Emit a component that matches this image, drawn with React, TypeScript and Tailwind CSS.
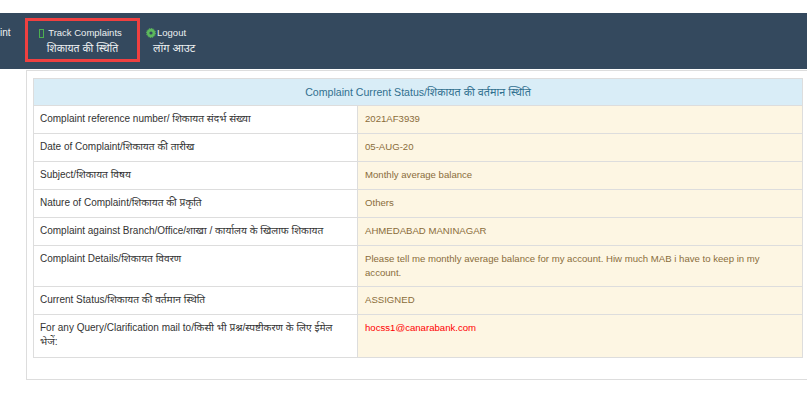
const rows: { en: string; hi: string; value: string; tall?: string; red?: boolean }[] = [
  { en: 'Complaint reference number/ ', hi: 'शिकायत संदर्भ संख्या', value: '2021AF3939' },
  { en: 'Date of Complaint/', hi: 'शिकायत की तारीख', value: '05-AUG-20' },
  { en: 'Subject/', hi: 'शिकायत विषय', value: 'Monthly average balance' },
  { en: 'Nature of Complaint/', hi: 'शिकायत की प्रकृति', value: 'Others' },
  { en: 'Complaint against Branch/Office/', hi: 'शाखा / कार्यालय के खिलाफ शिकायत', value: 'AHMEDABAD MANINAGAR' },
  {
    en: 'Complaint Details/',
    hi: 'शिकायत विवरण',
    value: 'Please tell me monthly average balance for my account. Hiw much MAB i have to keep in my account.',
    tall: 'h-[41px]',
  },
  { en: 'Current Status/', hi: 'शिकायत की वर्तमान स्थिति', value: 'ASSIGNED' },
  {
    en: 'For any Query/Clarification mail to/',
    hi: 'किसी भी प्रश्न/स्पष्टीकरण के लिए ईमेल भेजें:',
    value: 'hocss1@canarabank.com',
    tall: 'h-[42px]',
    red: true,
  },
];

const App = () => {
  return (
    <div className="h-[417px] w-[807px] overflow-hidden bg-white pt-[13px] font-['Liberation_Sans','Noto_Sans',sans-serif] text-[10px] leading-[14px] text-[#333]">
      <nav className="flex h-[56px] items-start bg-[#34495e] text-[#ecf0f1]">
        <div className="w-[25px] pt-[13px]">int</div>
        <div className="mt-[5px] flex h-[44px] w-[115px] flex-col items-center border-[3px] border-[#f04040] pt-[5px]">
          <span className="flex items-center whitespace-nowrap pr-[4px] text-[9.5px]">
            <span className="mr-[4px] h-[9px] w-[5px] border border-[#4caf50]" />
            Track Complaints
          </span>
          <span className="mt-px text-[10.5px]">शिकायत की स्थिति</span>
        </div>
        <div className="ml-[6px] flex flex-col pt-[13px]">
          <span className="flex items-center whitespace-nowrap text-[9.5px]">
            <svg className="mr-px h-[10px] w-[10px]" viewBox="0 0 10 10">
              <circle cx="5" cy="5" r="2.9" fill="none" stroke="#5cb85c" strokeWidth="2.6" />
              <circle cx="5" cy="5" r="4.5" fill="none" stroke="#5cb85c" strokeWidth="1" strokeDasharray="1.4 0.9" />
            </svg>
            Logout
          </span>
          <span className="mt-px pl-[7px] text-[11px] whitespace-nowrap">लॉग आउट</span>
        </div>
      </nav>
      <div className="ml-[26px] mt-px h-[310px] w-[790px] border border-[#ddd] pl-[6px] pt-[7px]">
        <div className="w-[770px] border border-[#ddd]">
          <div className="flex h-[27px] items-center justify-center border-b border-[#ddd] bg-[#d9edf7] text-[10.6px] text-[#31708f]">
            Complaint Current Status/<span className="text-[10.8px]">शिकायत की वर्तमान स्थिति</span>
          </div>
          {rows.map((row, i) => (
            <div
              key={row.value}
              className={`flex ${row.tall ?? 'h-[28px]'} ${i < rows.length - 1 ? 'border-b border-[#ddd]' : ''}`}
            >
              <div className="w-[324px] border-r border-[#ddd] pl-[6px] pr-[7px] pt-[6px]">
                {row.en}
                <span className="text-[10.2px]">{row.hi}</span>
              </div>
              <div
                className={`flex-1 bg-[#fdf6e3] px-[7px] pt-[6px] text-[9.6px] ${row.red ? 'text-[#ff0000]' : 'text-[#8a6d3b]'}`}
              >
                {row.value}
              </div>
            </div>
          ))}
        </div>
      </div>
    </div>
  );
};

export default App;
